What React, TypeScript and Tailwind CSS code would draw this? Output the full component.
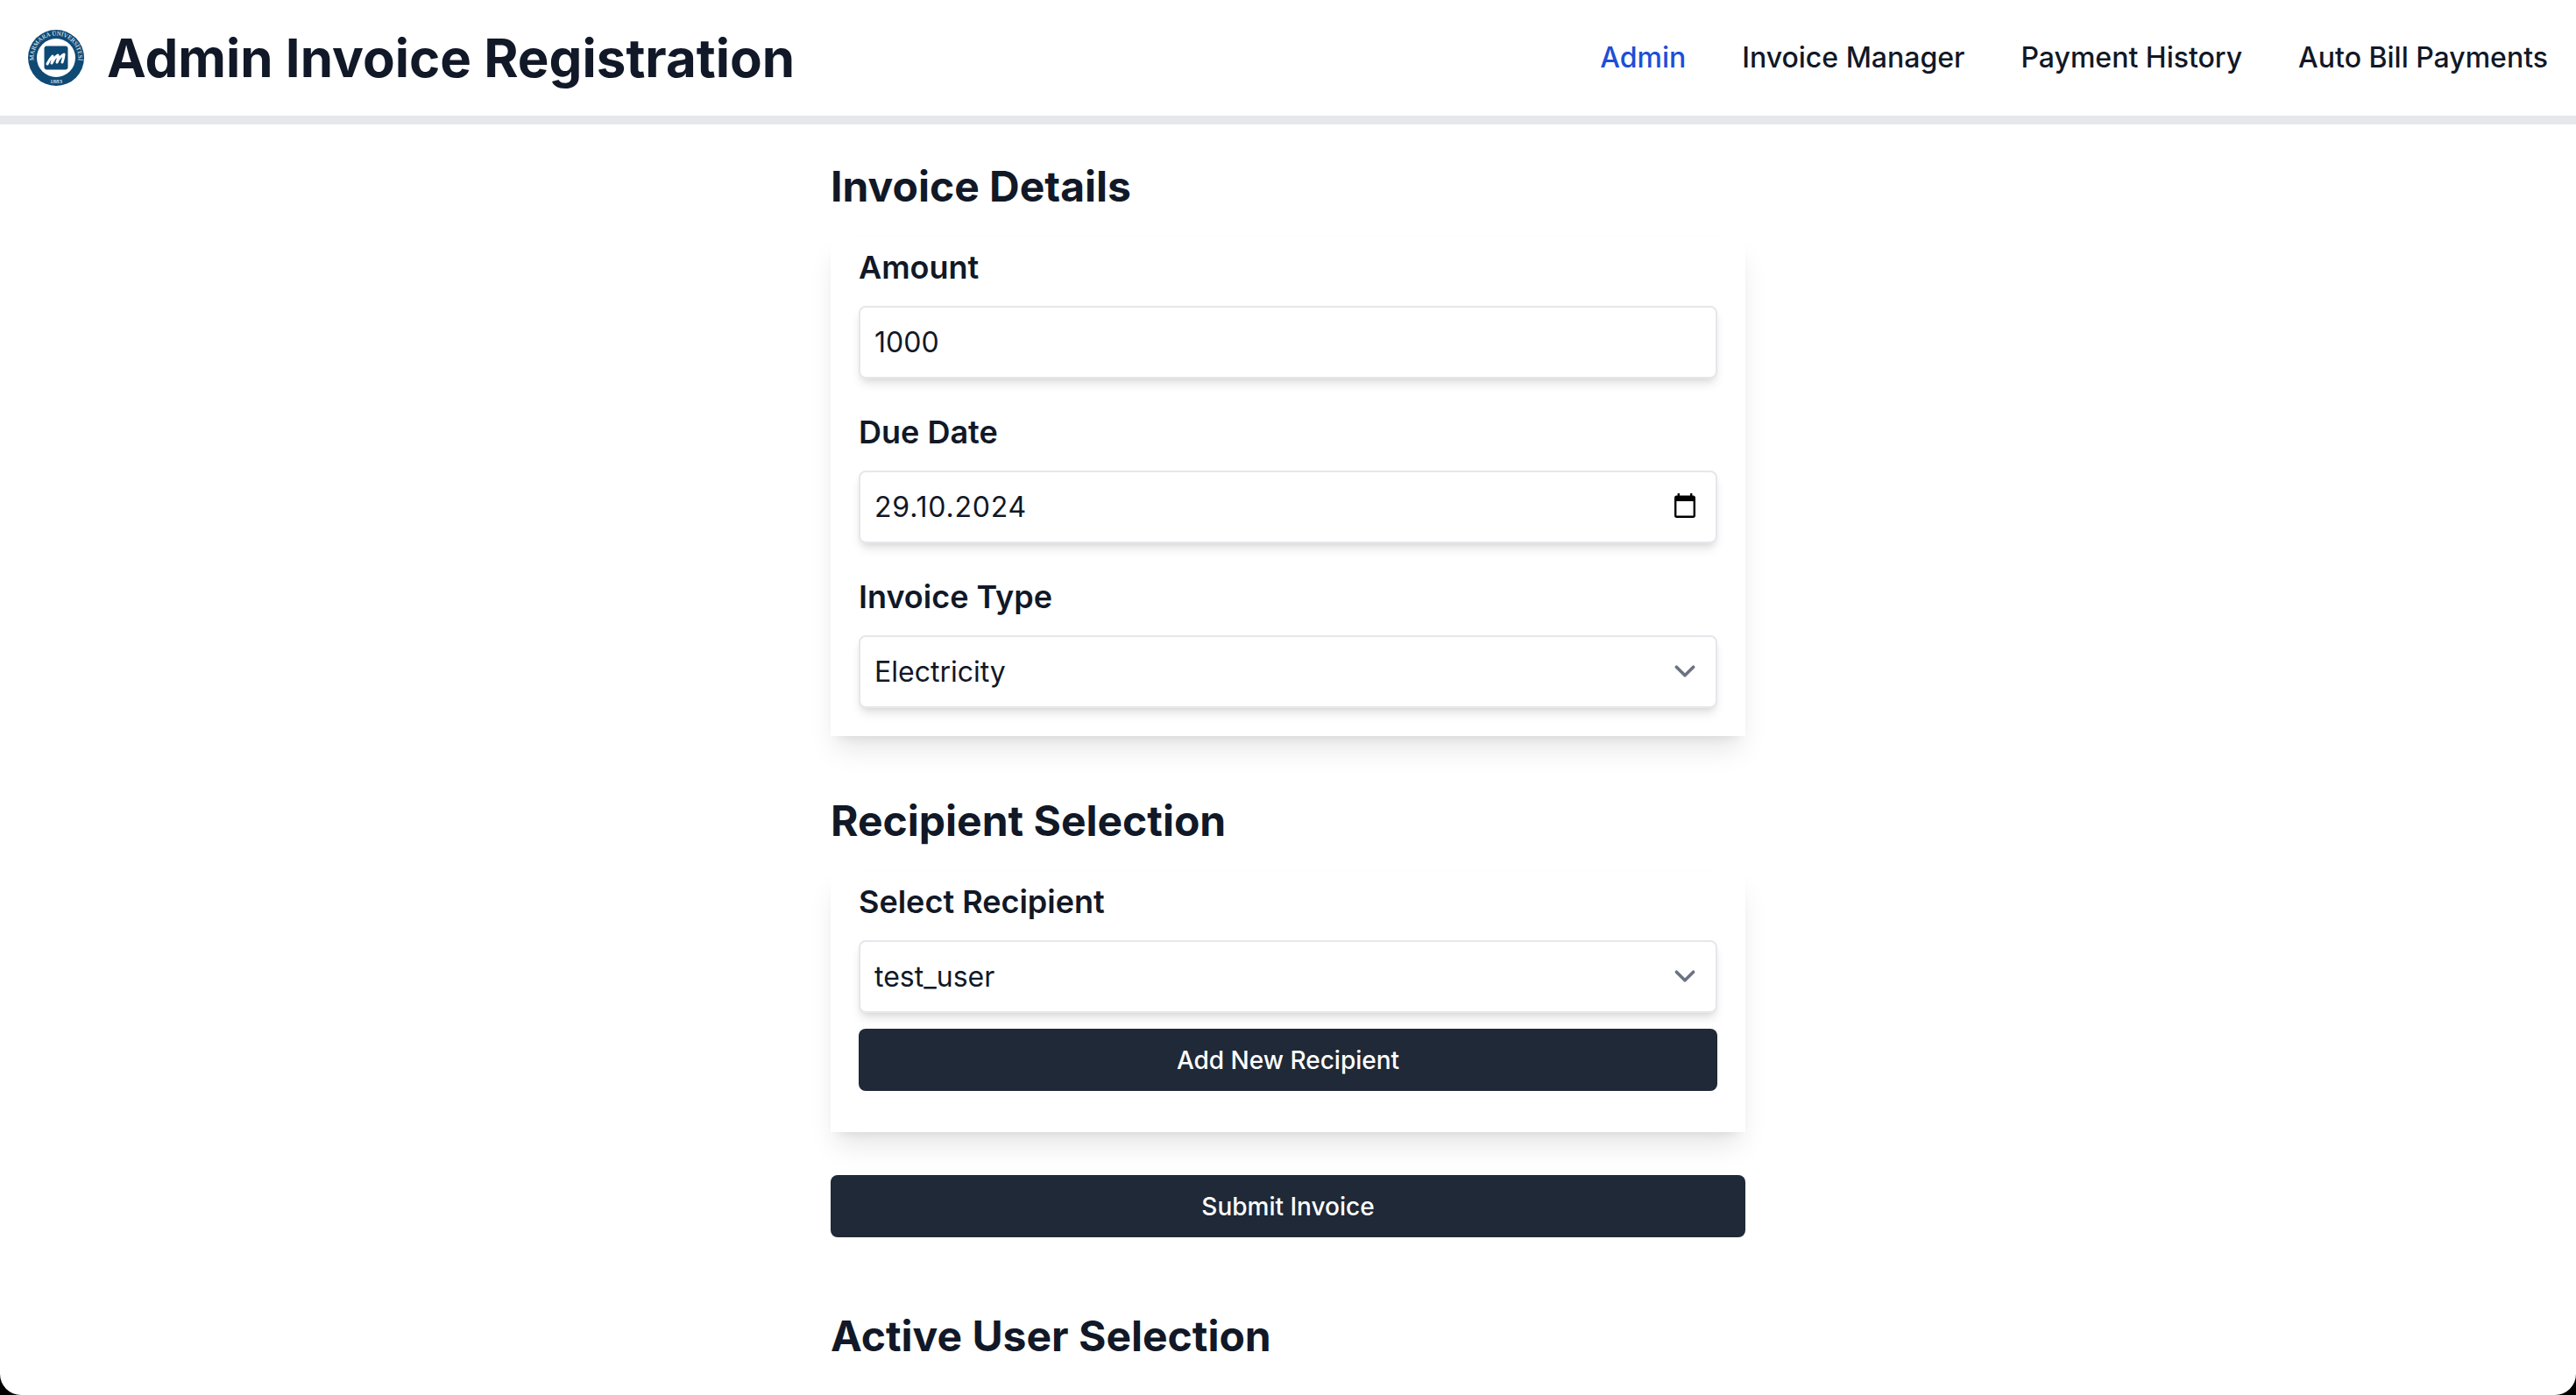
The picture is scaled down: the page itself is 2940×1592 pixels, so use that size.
import React from 'react';

const navLinks = ['Admin', 'Invoice Manager', 'Payment History', 'Auto Bill Payments'];

const Logo: React.FC = () => (
  <svg viewBox="0 0 64 64" className="w-16 h-16 shrink-0">
    <defs>
      <path id="ring-top" d="M 9.2 43 A 25.4 25.4 0 1 1 54.8 43" />
      <path id="ring-bottom" d="M 14 49.5 A 26 26 0 0 0 50 49.5" />
    </defs>
    <circle cx="32" cy="32" r="32" fill="#0f4a75" />
    <circle cx="32" cy="32" r="22" fill="#ffffff" />
    <rect x="18.5" y="18.5" width="27" height="27" rx="3" fill="#0f4a75" />
    <path
      d="M22 39c2-4 4-7 6-9 1 2 0 5-1 8 2-4 4-7 7-9 1 2 0 5-1 8 2-4 4-7 8-9 0 3-1 6-2 9"
      fill="none"
      stroke="#ffffff"
      strokeWidth="3"
      strokeLinecap="round"
      strokeLinejoin="round"
    />
    <text fill="#ffffff" fontSize="7" fontFamily="'Liberation Serif', serif">
      <textPath href="#ring-top" startOffset="50%" textAnchor="middle">
        MARMARA ÜNİVERSİTESİ
      </textPath>
    </text>
    <text x="32" y="61" fill="#ffffff" fontSize="7" textAnchor="middle" fontFamily="'Liberation Serif', serif">
      1883
    </text>
  </svg>
);

const Chevron: React.FC = () => (
  <svg
    viewBox="0 0 20 20"
    fill="none"
    className="absolute right-[13px] top-[17px] w-12 h-12 pointer-events-none"
  >
    <path d="M6 8l4 4 4-4" stroke="#6b7280" strokeWidth="1.5" strokeLinecap="round" strokeLinejoin="round" />
  </svg>
);

const CalendarIcon: React.FC = () => (
  <svg
    viewBox="2 1 20 22"
    preserveAspectRatio="none"
    className="absolute right-[25px] top-[26px] w-6 h-7 pointer-events-none"
  >
    <path d="M20 3h-1V1h-2v2H7V1H5v2H4c-1.1 0-2 .9-2 2v16c0 1.1.9 2 2 2h16c1.1 0 2-.9 2-2V5c0-1.1-.9-2-2-2zm0 18H4V8h16v13z" fill="#000000" />
  </svg>
);

const fieldClass =
  'block w-full h-[83px] bg-white border-2 border-[#e5e7eb] rounded-lg px-4 text-[32px] text-[#111827] shadow-[0_8px_12px_-2px_rgba(0,0,0,0.1),0_4px_8px_-4px_rgba(0,0,0,0.1)] outline-none appearance-none';

const Label: React.FC<{ children: React.ReactNode }> = ({ children }) => (
  <label className="block text-[36px] leading-[56px] font-semibold text-[#111827] mb-4">{children}</label>
);

const SectionTitle: React.FC<{ children: React.ReactNode }> = ({ children }) => (
  <h2 className="text-[48px] leading-[64px] font-bold text-[#111827]">{children}</h2>
);

const cardClass =
  'bg-white pt-[7px] px-8 shadow-[0_20px_30px_-6px_rgba(0,0,0,0.1),0_8px_12px_-8px_rgba(0,0,0,0.1)]';

const buttonClass =
  'block w-full h-[71px] bg-[#1f2937] text-white text-[28px] font-medium rounded-lg';

export default function App() {
  return (
    <div className="h-[1592px] bg-black overflow-hidden font-['Inter',sans-serif]">
      <div className="h-full bg-white rounded-b-[24px] overflow-hidden">
        {/* Header */}
        <header className="h-[142px] border-b-[10px] border-[#e5e7eb] flex items-center justify-between pl-8 pr-8">
          <div className="flex items-center gap-[26px]">
            <Logo />
            <h1 className="text-[60px] leading-[72px] font-bold text-[#111827]">Admin Invoice Registration</h1>
          </div>
          <nav className="flex items-center gap-16">
            {navLinks.map((link, idx) => (
              <a
                key={link}
                className={`text-[32px] leading-[48px] font-medium ${idx === 0 ? 'text-[#1d4ed8]' : 'text-[#111827]'}`}
              >
                {link}
              </a>
            ))}
          </nav>
        </header>

        <main className="w-[1044px] mx-auto">
          {/* Invoice Details */}
          <section className="pt-[39px]">
            <SectionTitle>Invoice Details</SectionTitle>
            <div className={`${cardClass} mt-[25px] pb-8`}>
              <div className="mb-[33px]">
                <Label>Amount</Label>
                <input className={fieldClass} defaultValue="1000" readOnly />
              </div>
              <div className="mb-[33px]">
                <Label>Due Date</Label>
                <div className="relative">
                  <input className={`${fieldClass} tracking-[0.8px]`} defaultValue="29.10.2024" readOnly />
                  <CalendarIcon />
                </div>
              </div>
              <div>
                <Label>Invoice Type</Label>
                <div className="relative">
                  <select className={fieldClass} defaultValue="Electricity">
                    <option>Electricity</option>
                    <option>Water</option>
                    <option>Gas</option>
                  </select>
                  <Chevron />
                </div>
              </div>
            </div>
          </section>

          {/* Recipient Selection */}
          <section className="pt-[65px]">
            <SectionTitle>Recipient Selection</SectionTitle>
            <div className={`${cardClass} mt-[25px] pb-[47px]`}>
              <Label>Select Recipient</Label>
              <div className="relative mb-[18px]">
                <select className={fieldClass} defaultValue="test_user">
                  <option>test_user</option>
                </select>
                <Chevron />
              </div>
              <button className={buttonClass}>Add New Recipient</button>
            </div>
          </section>

          <button className={`${buttonClass} mt-[49px]`}>Submit Invoice</button>

          {/* Active User Selection */}
          <section className="pt-[81px]">
            <SectionTitle>Active User Selection</SectionTitle>
          </section>
        </main>
      </div>
    </div>
  );
}
